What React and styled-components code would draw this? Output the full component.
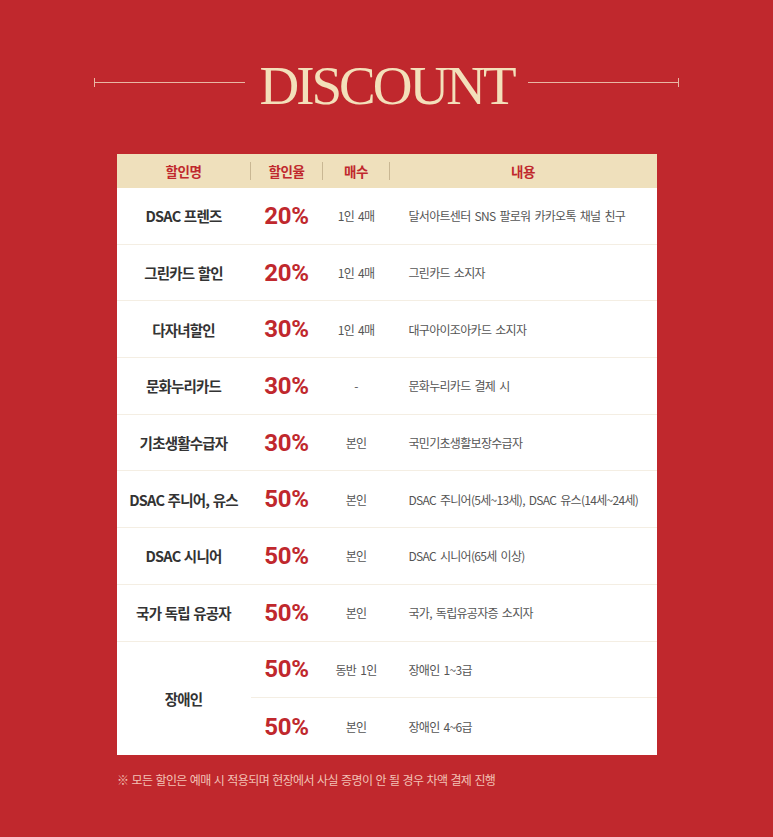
import React from 'react';
import styled, { createGlobalStyle } from 'styled-components';

const GlobalStyle = createGlobalStyle`
  html, body {
    margin: 0;
    padding: 0;
    background: #c0282d;
  }
  body {
    font-family: "Noto Sans CJK KR", "Noto Sans", sans-serif;
  }
`;

const Page = styled.div`
  width: 773px;
  min-height: 837px;
  background: #c0282d;
  padding-top: 52px;
  box-sizing: border-box;
`;

const TitleRow = styled.div`
  display: flex;
  align-items: center;
  justify-content: center;
  height: 60px;
  gap: 14px;
`;

const Line = styled.div`
  position: relative;
  width: 151px;
  height: 1px;
  background: #e9b7a4;
  &::after {
    content: '';
    position: absolute;
    top: -4px;
    ${({ side }) => (side === 'left' ? 'left: 0;' : 'right: 0;')}
    width: 1px;
    height: 9px;
    background: #e9b7a4;
  }
`;

const Title = styled.h1`
  margin: 0;
  font-family: "Liberation Serif", serif;
  font-weight: 400;
  font-size: 55px;
  line-height: 1;
  letter-spacing: -3px;
  color: #f3e0ba;
  padding-top: 6px;
`;

const Table = styled.div`
  width: 540px;
  margin: 42px auto 0;
  background: #fff;
  display: grid;
  grid-template-columns: 134px 72px 67px 1fr;
  grid-template-rows: 34px;
  grid-auto-rows: 56.7px;
`;

const Head = styled.div`
  background: #efe0bc;
  display: flex;
  align-items: center;
  justify-content: center;
  position: relative;
  color: #c0282d;
  font-weight: 700;
  font-size: 13.5px;
  letter-spacing: -0.5px;
  ${({ sep }) =>
    sep &&
    `&::after {
      content: '';
      position: absolute;
      right: 0;
      top: 8px;
      width: 1px;
      height: 18px;
      background: #c9b793;
    }`}
`;

const Cell = styled.div`
  display: flex;
  align-items: center;
  justify-content: ${({ left }) => (left ? 'flex-start' : 'center')};
  padding-left: ${({ left }) => (left ? '19px' : '0')};
  border-bottom: ${({ last }) => (last ? 'none' : '1px solid #f4eee3')};
  box-sizing: border-box;
  ${({ span }) => span && `grid-row: span ${span};`}
`;

const Name = styled.span`
  font-weight: 700;
  font-size: 14.5px;
  letter-spacing: -0.8px;
  word-spacing: 1px;
  color: #333;
`;

const Rate = styled.span`
  font-family: Roboto, "Liberation Sans", sans-serif;
  font-weight: 700;
  font-size: 24px;
  color: #c0282d;
  letter-spacing: -0.3px;
`;

const Small = styled.span`
  font-size: 12px;
  letter-spacing: -0.7px;
  word-spacing: 2px;
  color: #555;
  white-space: nowrap;
`;

const Note = styled.p`
  margin: 16px 0 0 117px;
  font-size: 12px;
  letter-spacing: -0.6px;
  word-spacing: 1px;
  color: #f2c2b6;
`;

const rows = [
  { name: 'DSAC 프렌즈', rate: '20%', count: '1인 4매', desc: '달서아트센터 SNS 팔로워 카카오톡 채널 친구' },
  { name: '그린카드 할인', rate: '20%', count: '1인 4매', desc: '그린카드 소지자' },
  { name: '다자녀할인', rate: '30%', count: '1인 4매', desc: '대구아이조아카드 소지자' },
  { name: '문화누리카드', rate: '30%', count: '-', desc: '문화누리카드 결제 시' },
  { name: '기초생활수급자', rate: '30%', count: '본인', desc: '국민기초생활보장수급자' },
  { name: 'DSAC 주니어, 유스', rate: '50%', count: '본인', desc: 'DSAC 주니어(5세~13세), DSAC 유스(14세~24세)' },
  { name: 'DSAC 시니어', rate: '50%', count: '본인', desc: 'DSAC 시니어(65세 이상)' },
  { name: '국가 독립 유공자', rate: '50%', count: '본인', desc: '국가, 독립유공자증 소지자' },
];

export default function App() {
  return (
    <Page>
      <GlobalStyle />
      <TitleRow>
        <Line side="left" />
        <Title>DISCOUNT</Title>
        <Line side="right" />
      </TitleRow>
      <Table>
        <Head sep>할인명</Head>
        <Head sep>할인율</Head>
        <Head sep>매수</Head>
        <Head>내용</Head>
        {rows.map((r) => (
          <React.Fragment key={r.name}>
            <Cell><Name>{r.name}</Name></Cell>
            <Cell><Rate>{r.rate}</Rate></Cell>
            <Cell><Small>{r.count}</Small></Cell>
            <Cell left><Small>{r.desc}</Small></Cell>
          </React.Fragment>
        ))}
        <Cell span={2} last><Name>장애인</Name></Cell>
        <Cell><Rate>50%</Rate></Cell>
        <Cell><Small>동반 1인</Small></Cell>
        <Cell left><Small>장애인 1~3급</Small></Cell>
        <Cell last><Rate>50%</Rate></Cell>
        <Cell last><Small>본인</Small></Cell>
        <Cell left last><Small>장애인 4~6급</Small></Cell>
      </Table>
      <Note>※ 모든 할인은 예매 시 적용되며 현장에서 사실 증명이 안 될 경우 차액 결제 진행</Note>
    </Page>
  );
}
